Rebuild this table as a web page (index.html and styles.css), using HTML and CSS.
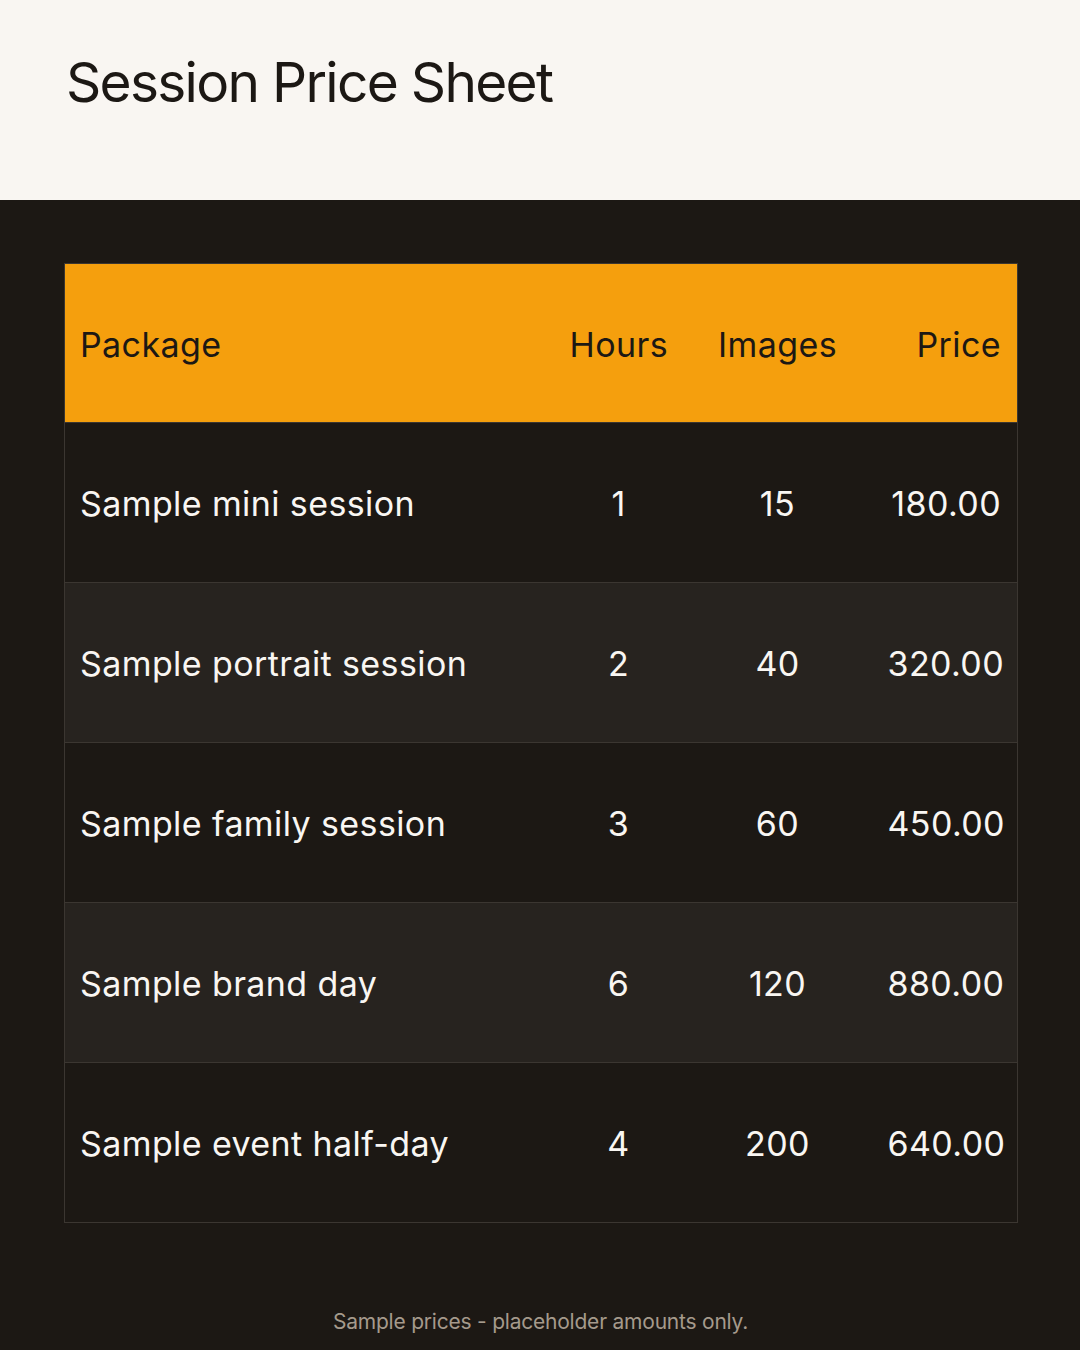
FILE: index.html
```html
<!DOCTYPE html>
<html lang="en">
<head>
<meta charset="utf-8">
<title>Session Price Sheet</title>
<link rel="stylesheet" href="styles.css">
</head>
<body>
<header class="top">
  <h1 class="title">Session Price Sheet</h1>
</header>
<main class="main">
  <table class="prices">
    <colgroup>
      <col class="c-pkg">
      <col class="c-hrs">
      <col class="c-img">
      <col class="c-price">
    </colgroup>
    <thead>
      <tr>
        <th class="left">Package</th>
        <th class="center">Hours</th>
        <th class="center">Images</th>
        <th class="right">Price</th>
      </tr>
    </thead>
    <tbody>
      <tr><td class="left">Sample mini session</td><td class="center">1</td><td class="center">15</td><td class="right">180.00</td></tr>
      <tr><td class="left">Sample portrait session</td><td class="center">2</td><td class="center">40</td><td class="right">320.00</td></tr>
      <tr><td class="left">Sample family session</td><td class="center">3</td><td class="center">60</td><td class="right">450.00</td></tr>
      <tr><td class="left">Sample brand day</td><td class="center">6</td><td class="center">120</td><td class="right">880.00</td></tr>
      <tr><td class="left">Sample event half-day</td><td class="center">4</td><td class="center">200</td><td class="right">640.00</td></tr>
    </tbody>
  </table>
  <p class="note">Sample prices - placeholder amounts only.</p>
</main>
</body>
</html>
```
FILE: styles.css
```css
html, body {
  margin: 0;
  padding: 0;
}
body {
  width: 1080px;
  height: 1350px;
  background: #1c1814;
  font-family: "Inter", "Liberation Sans", sans-serif;
  overflow: hidden;
}
.top {
  height: 200px;
  background: #f9f6f2;
  box-sizing: border-box;
  padding: 48px 0 0 66px;
}
.title {
  margin: 0;
  font-weight: 400;
  font-size: 55px;
  line-height: 68px;
  color: #1c1814;
  letter-spacing: -1.7px;
}
.main {
  padding: 63px 63px 0 64px;
}
.prices {
  width: 953px;
  border-collapse: collapse;
  table-layout: fixed;
  border: 1px solid #3b3631;
}
.c-pkg { width: 490px; }
.c-hrs { width: 128px; }
.c-img { width: 190px; }
.c-price { width: 145px; }
.prices th,
.prices td {
  height: 159px;
  padding: 2px 15px 0;
  font-size: 34px;
  font-weight: 400;
  letter-spacing: 0.4px;
  box-sizing: border-box;
}
.prices th {
  background: #f59f0d;
  color: #1c1814;
}
.prices td {
  color: #f9f6f2;
  border-top: 1px solid #3b3631;
  height: 160px;
}
.prices tbody tr:nth-child(even) td {
  background: #27231f;
}
.left { text-align: left; }
.center { text-align: center; }
.prices .right { text-align: right; padding-right: 16px; }
.note {
  margin: 86px 0 0;
  text-align: center;
  font-size: 21px;
  color: #a59a8c;
  letter-spacing: -0.22px;
}
```
